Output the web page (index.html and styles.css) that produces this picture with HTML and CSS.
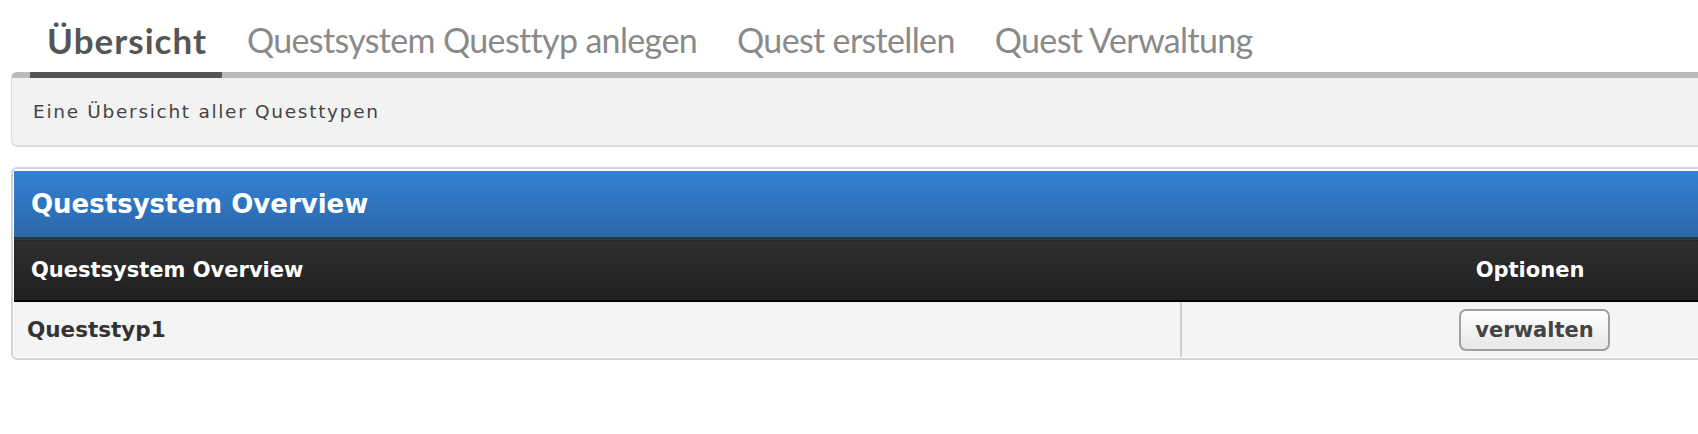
FILE: index.html
```html
<!DOCTYPE html>
<html lang="de">
<head>
<meta charset="utf-8">
<title>Questsystem</title>
<link rel="stylesheet" href="styles.css">
</head>
<body>
<div class="page">
  <nav class="tabs">
    <a class="tab active" href="#">Übersicht</a>
    <a class="tab" href="#">Questsystem Questtyp anlegen</a>
    <a class="tab" href="#">Quest erstellen</a>
    <a class="tab" href="#">Quest Verwaltung</a>
  </nav>
  <div class="intro">Eine Übersicht aller Questtypen</div>
  <section class="box">
    <h2 class="box-title">Questsystem Overview</h2>
    <table class="grid">
      <thead>
        <tr><th class="col-name">Questsystem Overview</th><th class="col-opt">Optionen</th></tr>
      </thead>
      <tbody>
        <tr><td class="col-name">Queststyp1</td><td class="col-opt"><button class="btn" type="button">verwalten</button></td></tr>
      </tbody>
    </table>
  </section>
</div>
</body>
</html>
```

FILE: styles.css
```css
html, body {
  margin: 0;
  padding: 0;
  background: #fff;
  overflow: hidden;
}

.page {
  width: 1871px;
  padding-left: 11px;
  font-family: "DejaVu Sans", "Liberation Sans", sans-serif;
}

.tabs {
  display: flex;
  align-items: flex-end;
  gap: 8px;
  height: 78px;
  padding-left: 19px;
  margin-bottom: -6px;
  position: relative;
  z-index: 1;
  box-sizing: border-box;
}

.tab {
  font-family: Lato, "Liberation Sans", sans-serif;
  font-size: 34px;
  letter-spacing: -0.65px;
  line-height: 40px;
  padding: 0 15px 12px 17px;
  color: #8a8a8a;
  text-decoration: none;
  border-bottom: 6px solid transparent;
}

.tab.active {
  color: #555;
  font-weight: bold;
  font-size: 35px;
  letter-spacing: 1px;
  border-bottom-color: #555;
}

.intro {
  background: #f2f2f2;
  border: 1px solid #dcdcdc;
  border-top: 6px solid #bbb;
  border-bottom: 2px solid #dcdcdc;
  border-radius: 6px;
  height: 67px;
  box-sizing: content-box;
  padding-left: 21px;
  font-size: 18.5px;
  letter-spacing: 1.7px;
  line-height: 67px;
  color: #444;
}

.box {
  margin-top: 20px;
  border: 2px solid #d4d4d4;
  border-radius: 6px;
  padding: 2px 1px 1px;
  background: #fff;
}

.box-title {
  margin: 0;
  height: 66px;
  line-height: 66px;
  padding-left: 17px;
  font-size: 26px;
  font-weight: bold;
  color: #fff;
  background: linear-gradient(#3382d4, #2b67a9);
  border-bottom: 2px solid #1f3a3c;
}

.grid {
  width: 100%;
  border-collapse: collapse;
}

.grid th {
  height: 60px;
  padding: 0;
  text-align: left;
  font-size: 21px;
  font-weight: bold;
  color: #fff;
  background: linear-gradient(#2f2f2f, #1f1f1f);
  border-top: 1px solid #3c3c3c;
  border-bottom: 2px solid #000;
}

.grid th.col-name {
  padding-left: 17px;
}

.grid th.col-opt,
.grid td.col-opt {
  text-align: center;
}

.col-name {
  width: 1167px;
  box-sizing: border-box;
}

.grid td {
  height: 55px;
  padding: 0;
  background: #f4f4f4;
  font-size: 21.5px;
  font-weight: bold;
  color: #333;
}

.grid td.col-name {
  padding-left: 13px;
  border-right: 2px solid #cfcfcf;
}

.btn {
  font-family: "DejaVu Sans", sans-serif;
  font-size: 21px;
  font-weight: bold;
  color: #444;
  height: 42px;
  padding: 0 14px;
  margin-left: 8px;
  border: 2px solid #a0a0a0;
  border-radius: 7px;
  background: linear-gradient(#ffffff, #e6e6e6);
}
```
